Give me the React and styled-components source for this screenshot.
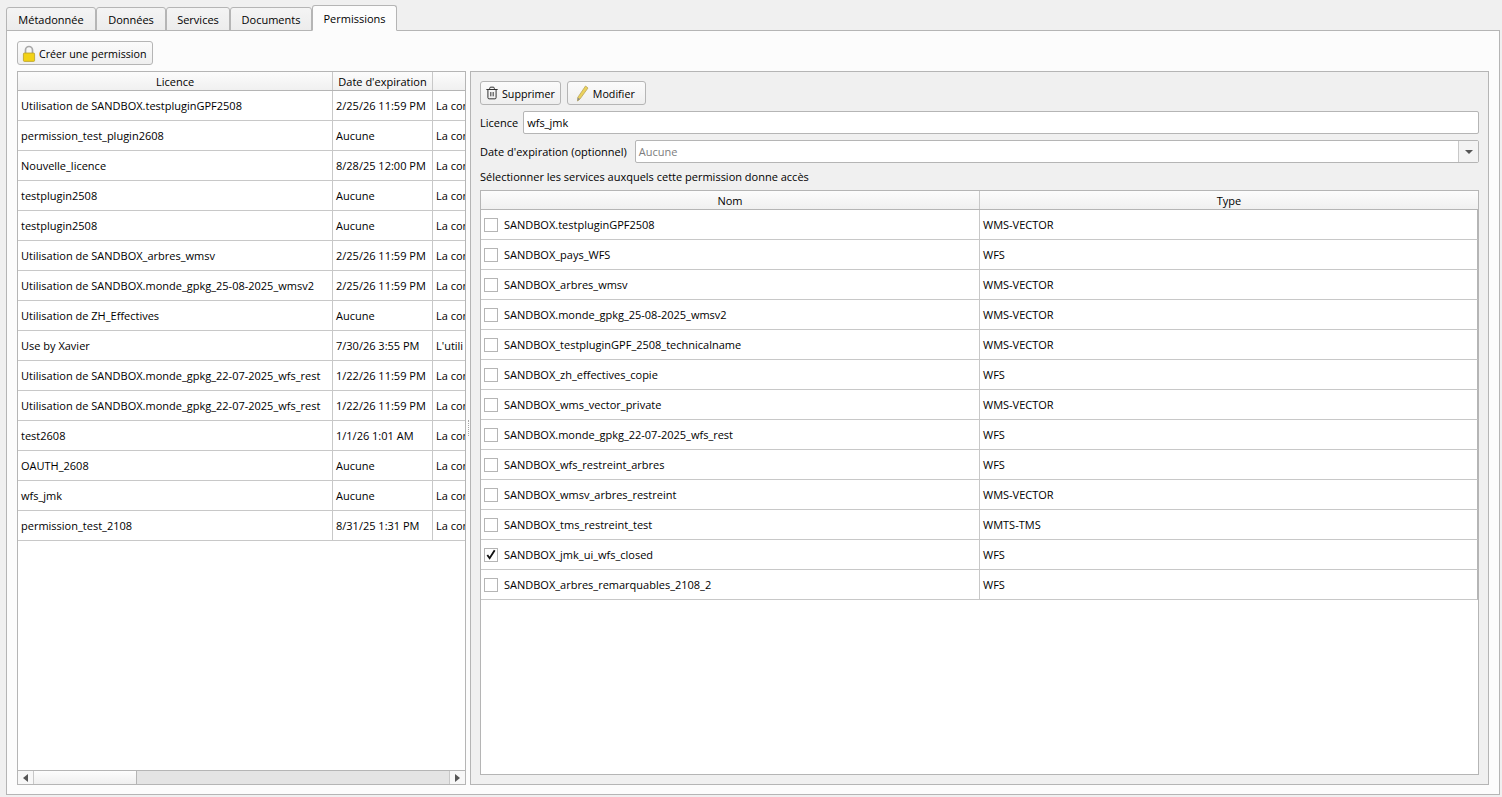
import { Trash2 } from 'lucide-react';
import styled, { createGlobalStyle } from 'styled-components';

const licences = [
	['Utilisation de SANDBOX.testpluginGPF2508', '2/25/26 11:59 PM', 'La con'],
	['permission_test_plugin2608', 'Aucune', 'La con'],
	['Nouvelle_licence', '8/28/25 12:00 PM', 'La con'],
	['testplugin2508', 'Aucune', 'La con'],
	['testplugin2508', 'Aucune', 'La con'],
	['Utilisation de SANDBOX_arbres_wmsv', '2/25/26 11:59 PM', 'La con'],
	['Utilisation de SANDBOX.monde_gpkg_25-08-2025_wmsv2', '2/25/26 11:59 PM', 'La con'],
	['Utilisation de ZH_Effectives', 'Aucune', 'La con'],
	['Use by Xavier', '7/30/26 3:55 PM', "L'utili"],
	['Utilisation de SANDBOX.monde_gpkg_22-07-2025_wfs_rest', '1/22/26 11:59 PM', 'La con'],
	['Utilisation de SANDBOX.monde_gpkg_22-07-2025_wfs_rest', '1/22/26 11:59 PM', 'La con'],
	['test2608', '1/1/26 1:01 AM', 'La con'],
	['OAUTH_2608', 'Aucune', 'La con'],
	['wfs_jmk', 'Aucune', 'La con'],
	['permission_test_2108', '8/31/25 1:31 PM', 'La con'],
];

const services = [
	['SANDBOX.testpluginGPF2508', 'WMS-VECTOR'],
	['SANDBOX_pays_WFS', 'WFS'],
	['SANDBOX_arbres_wmsv', 'WMS-VECTOR'],
	['SANDBOX.monde_gpkg_25-08-2025_wmsv2', 'WMS-VECTOR'],
	['SANDBOX_testpluginGPF_2508_technicalname', 'WMS-VECTOR'],
	['SANDBOX_zh_effectives_copie', 'WFS'],
	['SANDBOX_wms_vector_private', 'WMS-VECTOR'],
	['SANDBOX.monde_gpkg_22-07-2025_wfs_rest', 'WFS'],
	['SANDBOX_wfs_restreint_arbres', 'WFS'],
	['SANDBOX_wmsv_arbres_restreint', 'WMS-VECTOR'],
	['SANDBOX_tms_restreint_test', 'WMTS-TMS'],
	['SANDBOX_jmk_ui_wfs_closed', 'WFS', true],
	['SANDBOX_arbres_remarquables_2108_2', 'WFS'],
];

const tabs = [
	{ label: 'Métadonnée', width: 90 },
	{ label: 'Données', width: 70 },
	{ label: 'Services', width: 64 },
	{ label: 'Documents', width: 82 },
	{ label: 'Permissions', width: 85, active: true },
];

const LockIcon = () => (
	<svg width='16' height='17' viewBox='0 0 16 17'>
		<path d='M4.5 8V5a3.5 3.5 0 0 1 7 0v3' fill='none' stroke='#a8a8a8' strokeWidth='1.7' />
		<rect x='2.4' y='8' width='11.2' height='8.4' rx='1' fill='#f2d216' stroke='#b8a02a' strokeWidth='0.8' />
	</svg>
);

const PencilIcon = () => (
	<svg width='13' height='17' viewBox='0 0 13 17'>
		<path d='M9.5 1 L12 3 L4 14 L1.5 16 L1.8 12.4 Z' fill='#ecd25c' stroke='#b9a65a' strokeWidth='0.8' />
		<path d='M1.5 16 L1.8 12.4 L4 14 Z' fill='#8d8d8d' />
	</svg>
);

const App = () => {
	return (
		<>
			<GlobalStyle />
			<Page>
				<TabBar>
					{tabs.map((tab) => (
						<Tab key={tab.label} $active={tab.active} $width={tab.width}>
							{tab.label}
						</Tab>
					))}
				</TabBar>
				<TabPane>
					<ToolButton>
						<LockIcon />
						<ButtonLabel>Créer une permission</ButtonLabel>
					</ToolButton>
					<Split>
						<LeftTable>
							<LeftScroll>
								<LeftHeader>
									<HeadCell>Licence</HeadCell>
									<HeadCell>Date d'expiration</HeadCell>
									<HeadCell />
								</LeftHeader>
								{licences.map((row, i) => (
									<LeftRow key={i}>
										<Cell>{row[0]}</Cell>
										<Cell>{row[1]}</Cell>
										<Cell>{row[2]}</Cell>
									</LeftRow>
								))}
							</LeftScroll>
							<ScrollBar>
								<ScrollEnd>
									<ArrowLeft />
								</ScrollEnd>
								<ScrollThumb />
								<ScrollTrack />
								<ScrollEnd>
									<ArrowRight />
								</ScrollEnd>
							</ScrollBar>
						</LeftTable>
						<Handle />
						<DetailPanel>
							<ButtonRow>
								<ToolButton>
									<IconBox>
										<Trash2 size={14} strokeWidth={1.7} color='#2f2f2f' />
									</IconBox>
									<ButtonLabel>Supprimer</ButtonLabel>
								</ToolButton>
								<EditButton>
									<PencilIcon />
									<ButtonLabel>Modifier</ButtonLabel>
								</EditButton>
							</ButtonRow>
							<FieldRow $gap={5}>
								<span>Licence</span>
								<TextInput>wfs_jmk</TextInput>
							</FieldRow>
							<FieldRow $gap={8}>
								<span>Date d'expiration (optionnel)</span>
								<Combo>
									<ComboText>Aucune</ComboText>
									<ComboButton>
										<ArrowDown />
									</ComboButton>
								</Combo>
							</FieldRow>
							<HelpLabel>Sélectionner les services auxquels cette permission donne accès</HelpLabel>
							<ServiceTable>
								<ServiceHeader>
									<HeadCell>Nom</HeadCell>
									<HeadCell>Type</HeadCell>
								</ServiceHeader>
								{services.map((row) => (
									<ServiceRow key={row[0]}>
										<NameCell>
											<CheckBox>
												{row[2] && (
													<svg width='13' height='13' viewBox='0 0 13 13'>
														<path d='M2.5 7 L5 10.5 L10.5 2' fill='none' stroke='#111' strokeWidth='2' />
													</svg>
												)}
											</CheckBox>
											{row[0]}
										</NameCell>
										<Cell>{row[1]}</Cell>
									</ServiceRow>
								))}
							</ServiceTable>
						</DetailPanel>
					</Split>
				</TabPane>
			</Page>
		</>
	);
};

const GlobalStyle = createGlobalStyle`
	html, body {
		margin: 0;
		padding: 0;
		overflow: hidden;
		background-color: #f0f0f0;
	}
	* {
		box-sizing: border-box;
	}
`;

const Page = styled.div`
	width: 1502px;
	height: 797px;
	padding: 5px 2px 2px 6px;
	display: flex;
	flex-direction: column;
	font-family: 'Open Sans', 'Noto Sans', sans-serif;
	font-size: 11px;
	color: #000;
`;

const TabBar = styled.div`
	display: flex;
	align-items: flex-end;
	height: 26px;
	position: relative;
	z-index: 1;
	margin-bottom: -1px;
`;

const Tab = styled.div`
	display: flex;
	align-items: center;
	justify-content: center;
	width: ${(p) => p.$width}px;
	height: ${(p) => (p.$active ? '26px' : '24px')};
	border: 1px solid #b5b5b5;
	border-radius: 3px 3px 0 0;
	background: ${(p) => (p.$active ? '#fcfcfc' : 'linear-gradient(#f4f4f4, #ececec)')};
	border-bottom-color: ${(p) => (p.$active ? '#fcfcfc' : '#b5b5b5')};
`;

const TabPane = styled.div`
	flex: 1;
	min-height: 0;
	display: flex;
	flex-direction: column;
	align-items: flex-start;
	gap: 6px;
	padding: 10px 10px 8px 10px;
	background-color: #fcfcfc;
	border: 1px solid #b5b5b5;
`;

const ToolButton = styled.button`
	display: flex;
	align-items: center;
	gap: 2px;
	height: 24px;
	padding: 0 5px 0 3px;
	border: 1px solid #b5b5b5;
	border-radius: 3px;
	background: linear-gradient(#fbfbfb, #efefef);
	font: inherit;
	font-size: 10.7px;
	color: inherit;
`;

const ButtonLabel = styled.span`
	padding-top: 2px;
`;

const EditButton = styled(ToolButton)`
	gap: 4px;
	padding: 0 10px 0 8px;
`;

const IconBox = styled.span`
	width: 16px;
	display: flex;
	justify-content: center;
`;

const Split = styled.div`
	flex: 1;
	min-height: 0;
	width: 100%;
	display: flex;
`;

const LeftTable = styled.div`
	width: 449px;
	height: 714px;
	flex-shrink: 0;
	display: flex;
	flex-direction: column;
	border: 1px solid #b5b5b5;
	background-color: #fff;
`;

const LeftScroll = styled.div`
	flex: 1;
	min-height: 0;
	overflow: hidden;
`;

const LeftHeader = styled.div`
	display: grid;
	grid-template-columns: 315px 100px 200px;
	height: 19px;
	width: 615px;
	background: linear-gradient(#fcfcfc, #f0f0f0);
	border-bottom: 1px solid #b5b5b5;
`;

const HeadCell = styled.div`
	display: flex;
	align-items: center;
	justify-content: center;
	border-right: 1px solid #c8c8c8;
	white-space: nowrap;
	&:last-child {
		border-right: none;
	}
`;

const LeftRow = styled.div`
	display: grid;
	grid-template-columns: 315px 100px 200px;
	height: 30px;
	width: 615px;
	border-bottom: 1px solid #c8c8c8;
`;

const Cell = styled.div`
	display: flex;
	align-items: center;
	padding-left: 3px;
	white-space: nowrap;
	overflow: hidden;
	border-right: 1px solid #c8c8c8;
	&:last-child {
		border-right: none;
	}
`;

const ScrollBar = styled.div`
	display: flex;
	height: 14px;
	flex-shrink: 0;
	border-top: 1px solid #b5b5b5;
	background-color: #e4e4e4;
`;

const ScrollEnd = styled.div`
	width: 15px;
	display: flex;
	align-items: center;
	justify-content: center;
	background: #f7f7f7;
`;

const ScrollThumb = styled.div`
	width: 104px;
	background: linear-gradient(#fdfdfd, #efefef);
	border-left: 1px solid #c8c8c8;
	border-right: 1px solid #b5b5b5;
`;

const ScrollTrack = styled.div`
	flex: 1;
	border-right: 1px solid #c8c8c8;
`;

const ArrowLeft = styled.span`
	border-style: solid;
	border-width: 4px 5px 4px 0;
	border-color: transparent #555 transparent transparent;
`;

const ArrowRight = styled.span`
	border-style: solid;
	border-width: 4px 0 4px 5px;
	border-color: transparent transparent transparent #555;
`;

const ArrowDown = styled.span`
	border-style: solid;
	border-width: 4px 4px 0 4px;
	border-color: #555 transparent transparent transparent;
`;

const Handle = styled.div`
	width: 4px;
	height: 714px;
	flex-shrink: 0;
	display: flex;
	align-items: center;
	justify-content: center;
	&::after {
		content: '';
		height: 16px;
		border-left: 1px dotted #a8a8a8;
	}
`;

const DetailPanel = styled.div`
	flex: 1;
	height: 714px;
	display: flex;
	flex-direction: column;
	padding: 9px;
	background-color: #f0f0f0;
	border: 1px solid #b5b5b5;
`;

const ButtonRow = styled.div`
	display: flex;
	gap: 6px;
	margin-bottom: 6px;
`;

const FieldRow = styled.div`
	display: flex;
	align-items: center;
	gap: ${(p) => p.$gap}px;
	height: 23px;
	margin-bottom: 6px;
	white-space: nowrap;
`;

const TextInput = styled.div`
	flex: 1;
	height: 23px;
	display: flex;
	align-items: center;
	padding-left: 3px;
	background-color: #fff;
	border: 1px solid #b5b5b5;
	border-radius: 2px;
`;

const Combo = styled(TextInput)`
	padding-left: 0;
`;

const ComboText = styled.div`
	flex: 1;
	padding-left: 3px;
	color: #7d7d7d;
`;

const ComboButton = styled.div`
	width: 20px;
	height: 100%;
	display: flex;
	align-items: center;
	justify-content: center;
	background: #f3f3f3;
	border-left: 1px solid #c8c8c8;
`;

const HelpLabel = styled.div`
	height: 15px;
	margin: 0 0 6px;
	display: flex;
	align-items: center;
`;

const ServiceTable = styled.div`
	flex: 1;
	min-height: 0;
	display: flex;
	flex-direction: column;
	background-color: #fff;
	border: 1px solid #b5b5b5;
`;

const ServiceHeader = styled.div`
	display: grid;
	grid-template-columns: 499px 1fr;
	height: 19px;
	flex-shrink: 0;
	background: linear-gradient(#fcfcfc, #f0f0f0);
	border-bottom: 1px solid #b5b5b5;
`;

const ServiceRow = styled.div`
	display: grid;
	grid-template-columns: 499px 1fr;
	height: 30px;
	flex-shrink: 0;
	border-bottom: 1px solid #c8c8c8;
	border-right: 1px solid #b5b5b5;
`;

const NameCell = styled(Cell)`
	gap: 6px;
`;

const CheckBox = styled.div`
	width: 14px;
	height: 14px;
	display: flex;
	align-items: center;
	justify-content: center;
	background-color: #fff;
	border: 1px solid #b5b5b5;
`;

export default App;
